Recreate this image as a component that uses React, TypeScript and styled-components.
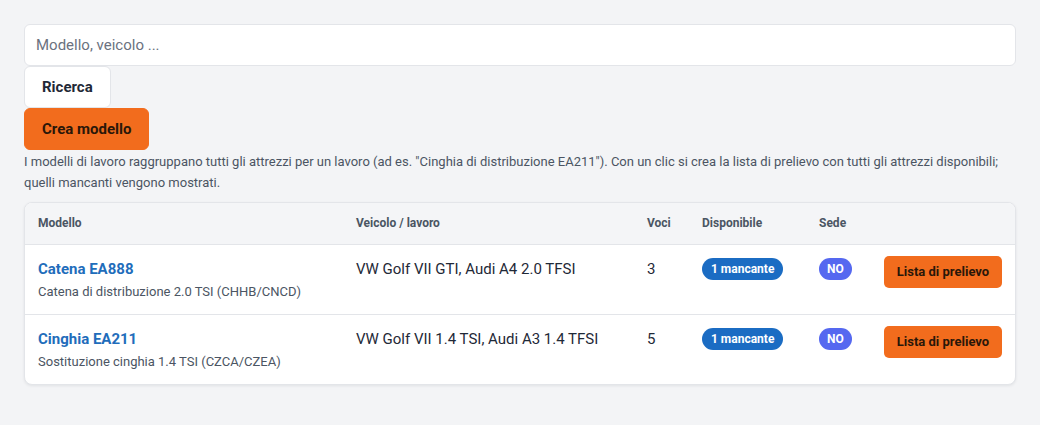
import React from "react";
import styled, { createGlobalStyle } from "styled-components";

const GlobalStyle = createGlobalStyle`
  html, body {
    margin: 0;
    padding: 0;
    background: #f3f4f6;
  }
  body {
    font-family: Roboto, "Liberation Sans", Arial, sans-serif;
    color: #1f2937;
  }
  * { box-sizing: border-box; }
`;

const Page = styled.div`
  padding: 24px 24px 40px;
`;

const SearchInput = styled.input`
  display: block;
  width: 100%;
  height: 42px;
  padding: 0 11px;
  border: 1px solid #e3e5e9;
  border-radius: 6px;
  background: #fff;
  font: 400 15px Roboto, "Liberation Sans", Arial, sans-serif;
  color: #1f2937;
  outline: none;
  &::placeholder { color: #6b7280; }
`;

const Button = styled.button<{ $variant?: "plain" | "primary" }>`
  display: inline-flex;
  align-items: center;
  justify-content: center;
  height: 42px;
  padding: 0 17px;
  border-radius: 6px;
  border: 1px solid ${(p) => (p.$variant === "primary" ? "#f26c1d" : "#e3e5e9")};
  background: ${(p) => (p.$variant === "primary" ? "#f26c1d" : "#fff")};
  color: ${(p) => (p.$variant === "primary" ? "#2a1709" : "#1f2937")};
  font: 700 15px Roboto, "Liberation Sans", Arial, sans-serif;
  cursor: pointer;
`;

const Actions = styled.div`
  display: flex;
  flex-direction: column;
  align-items: flex-start;
  gap: 0;
`;

const Hint = styled.p`
  margin: 1px 0 0;
  font-size: 13px;
  line-height: 21px;
  color: #4b5563;
`;

const Card = styled.div`
  margin-top: 9px;
  background: #fff;
  border: 1px solid #e3e5e9;
  border-radius: 8px;
  box-shadow: 0 1px 3px rgba(17, 24, 39, 0.08);
  overflow: hidden;
`;

const Table = styled.table`
  width: 100%;
  border-collapse: collapse;
  table-layout: fixed;
`;

const HeadCell = styled.th`
  height: 41px;
  padding: 0 13px;
  background: #f4f5f7;
  border-bottom: 1px solid #e3e5e9;
  text-align: left;
  font-size: 12px;
  font-weight: 700;
  color: #4b5563;
`;

const Row = styled.tr`
  & + & td { border-top: 1px solid #e3e5e9; }
`;

const Cell = styled.td`
  height: 70px;
  padding: 13px 13px 13px;
  vertical-align: top;
  font-size: 15px;
  line-height: 22px;
  color: #1f2937;
`;

const Title = styled.a`
  display: block;
  font-size: 15px;
  font-weight: 700;
  line-height: 22px;
  color: #1f6dbb;
  text-decoration: none;
`;

const Subtitle = styled.div`
  margin-top: 3px;
  font-size: 13px;
  line-height: 18px;
  color: #4b5563;
`;

const Pill = styled.span<{ $tone: "blue" | "indigo" }>`
  display: inline-flex;
  align-items: center;
  height: 22px;
  padding: 0 ${(p) => (p.$tone === "blue" ? 9 : 8)}px;
  border-radius: 11px;
  background: ${(p) => (p.$tone === "blue" ? "#1b6cc3" : "#5568f0")};
  color: #fff;
  font-size: 12px;
  font-weight: 700;
  line-height: 1;
  vertical-align: top;
`;

const PickButton = styled.button`
  display: inline-flex;
  align-items: center;
  justify-content: center;
  width: 118px;
  height: 32px;
  margin-top: -2px;
  border: none;
  border-radius: 5px;
  background: #f26c1d;
  color: #2a1709;
  font: 700 13px Roboto, "Liberation Sans", Arial, sans-serif;
  cursor: pointer;
`;

type Template = {
  name: string;
  description: string;
  vehicles: string;
  items: number;
  missing: number;
};

const templates: Template[] = [
  {
    name: "Catena EA888",
    description: "Catena di distribuzione 2.0 TSI (CHHB/CNCD)",
    vehicles: "VW Golf VII GTI, Audi A4 2.0 TFSI",
    items: 3,
    missing: 1,
  },
  {
    name: "Cinghia EA211",
    description: "Sostituzione cinghia 1.4 TSI (CZCA/CZEA)",
    vehicles: "VW Golf VII 1.4 TSI, Audi A3 1.4 TFSI",
    items: 5,
    missing: 1,
  },
];

export default function App() {
  return (
    <Page>
      <GlobalStyle />
      <SearchInput placeholder="Modello, veicolo ..." />
      <Actions>
        <Button>Ricerca</Button>
        <Button $variant="primary">Crea modello</Button>
      </Actions>
      <Hint>
        I modelli di lavoro raggruppano tutti gli attrezzi per un lavoro (ad es. "Cinghia di distribuzione
        EA211"). Con un clic si crea la lista di prelievo con tutti gli attrezzi disponibili; quelli mancanti
        vengono mostrati.
      </Hint>
      <Card>
        <Table>
          <colgroup>
            <col style={{ width: 318 }} />
            <col style={{ width: 291 }} />
            <col style={{ width: 55 }} />
            <col style={{ width: 117 }} />
            <col style={{ width: 65 }} />
            <col />
          </colgroup>
          <thead>
            <tr>
              <HeadCell>Modello</HeadCell>
              <HeadCell>Veicolo / lavoro</HeadCell>
              <HeadCell>Voci</HeadCell>
              <HeadCell>Disponibile</HeadCell>
              <HeadCell>Sede</HeadCell>
              <HeadCell />
            </tr>
          </thead>
          <tbody>
            {templates.map((t) => (
              <Row key={t.name}>
                <Cell>
                  <Title href="#">{t.name}</Title>
                  <Subtitle>{t.description}</Subtitle>
                </Cell>
                <Cell>{t.vehicles}</Cell>
                <Cell>{t.items}</Cell>
                <Cell>
                  <Pill $tone="blue">{t.missing} mancante</Pill>
                </Cell>
                <Cell>
                  <Pill $tone="indigo">NO</Pill>
                </Cell>
                <Cell>
                  <PickButton>Lista di prelievo</PickButton>
                </Cell>
              </Row>
            ))}
          </tbody>
        </Table>
      </Card>
    </Page>
  );
}
